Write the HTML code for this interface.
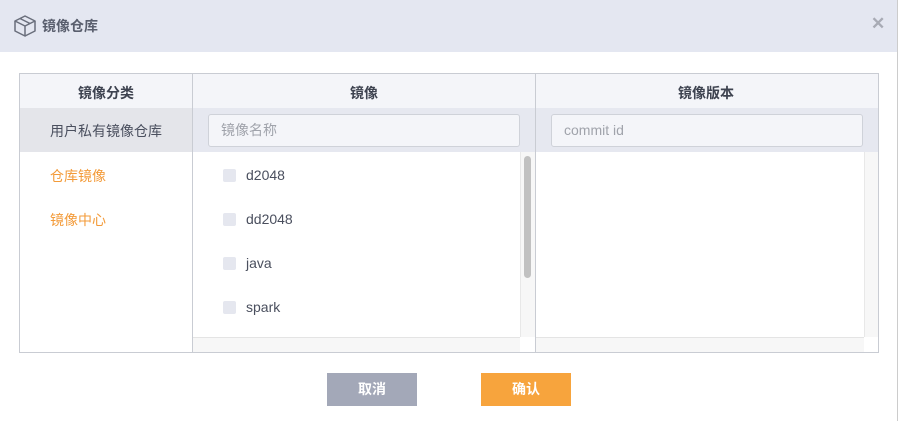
<!DOCTYPE html>
<html><head><meta charset="utf-8"><style>
*{margin:0;padding:0;box-sizing:border-box}
body{width:900px;height:421px;background:#fff;font-family:"Liberation Sans","Noto Sans CJK SC",sans-serif;position:relative;overflow:hidden;color:#4a4f5e}
.abs{position:absolute}
.hdr{left:0;top:0;width:900px;height:52px;background:#e4e7f1}
.t{font-size:14px;font-weight:bold;color:#5a5f6e}
.inp{background:#f4f5f9;border:1px solid #cfd2d9;border-radius:3px;font-size:14px;color:#a0a3ab;padding-left:12px;line-height:31px}
.cb{width:13px;height:13px;background:#e5e7ef;border-radius:2px}
.it{font-size:14px;color:#4a4f5e}
.btn{width:90px;height:33px;color:#fff;font-size:14px;font-weight:bold;text-align:center;line-height:33px}
</style></head><body>
<div class="abs hdr"></div>
<svg class="abs" style="left:13px;top:14px" width="24" height="24" viewBox="0 0 24 24" fill="none" stroke="#6a6f7c" stroke-width="1.5" stroke-linejoin="round"><path d="M12 2 L22 7 L12 12 L2 7 Z"/><path d="M2 7 V17 L12 22 V12"/><path d="M22 7 V17 L12 22"/><path d="M7 4.5 L17 9.5"/></svg>
<div class="abs t" style="left:42px;top:16px;font-size:14px">镜像仓库</div>
<div class="abs" style="left:871px;top:14px;font-size:17px;color:#a8abb5;font-weight:bold">✕</div>
<div class="abs" style="left:897px;top:0;width:3px;height:421px;background:#fff;border-left:1px solid #ccc"></div>

<div class="abs" style="left:19px;top:73px;width:860px;height:280px;border:1px solid #c9ccd3"></div>
<div class="abs" style="left:20px;top:74px;width:858px;height:34px;background:#f4f5f9"></div>
<div class="abs" style="left:193px;top:108px;width:685px;height:44px;background:#e6e8f0"></div>
<div class="abs" style="left:20px;top:108px;width:172px;height:44px;background:#e4e5ea"></div>
<div class="abs" style="left:192px;top:74px;width:1px;height:278px;background:#c9ccd3"></div>
<div class="abs" style="left:535px;top:74px;width:1px;height:278px;background:#c9ccd3"></div>
<div class="abs t" style="left:78px;top:83px;color:#3e4350">镜像分类</div>
<div class="abs t" style="left:350px;top:83px;color:#3e4350">镜像</div>
<div class="abs t" style="left:678px;top:83px;color:#3e4350">镜像版本</div>
<div class="abs" style="left:50px;top:121px;font-size:14px;color:#4a4f5e">用户私有镜像仓库</div>
<div class="abs" style="left:50px;top:166px;font-size:14px;color:#f39b3a">仓库镜像</div>
<div class="abs" style="left:50px;top:210px;font-size:14px;color:#f39b3a">镜像中心</div>
<div class="abs inp" style="left:208px;top:114px;width:312px;height:33px">镜像名称</div>
<div class="abs inp" style="left:551px;top:114px;width:312px;height:33px">commit id</div>
<!-- scroll tracks -->
<div class="abs" style="left:193px;top:337px;width:327px;height:15px;background:#f7f7f7;border-top:1px solid #e4e4e4"></div>
<div class="abs" style="left:520px;top:152px;width:15px;height:185px;background:#f7f7f7;border-left:1px solid #e8e8e8"></div>
<div class="abs" style="left:524px;top:156px;width:7px;height:122px;background:#c1c1c1;border-radius:4px"></div>
<div class="abs" style="left:536px;top:337px;width:328px;height:15px;background:#f7f7f7;border-top:1px solid #e4e4e4"></div>
<div class="abs" style="left:864px;top:152px;width:14px;height:185px;background:#f7f7f7;border-left:1px solid #e8e8e8"></div>
<div class="abs cb" style="left:223px;top:169px"></div><div class="abs it" style="left:246px;top:167px">d2048</div>
<div class="abs cb" style="left:223px;top:213px"></div><div class="abs it" style="left:246px;top:211px">dd2048</div>
<div class="abs cb" style="left:223px;top:257px"></div><div class="abs it" style="left:246px;top:255px">java</div>
<div class="abs cb" style="left:223px;top:301px"></div><div class="abs it" style="left:246px;top:299px">spark</div>

<div class="abs btn" style="left:327px;top:373px;background:#a3a8b8">取消</div>
<div class="abs btn" style="left:481px;top:373px;background:#f7a43d">确认</div>
</body></html>
